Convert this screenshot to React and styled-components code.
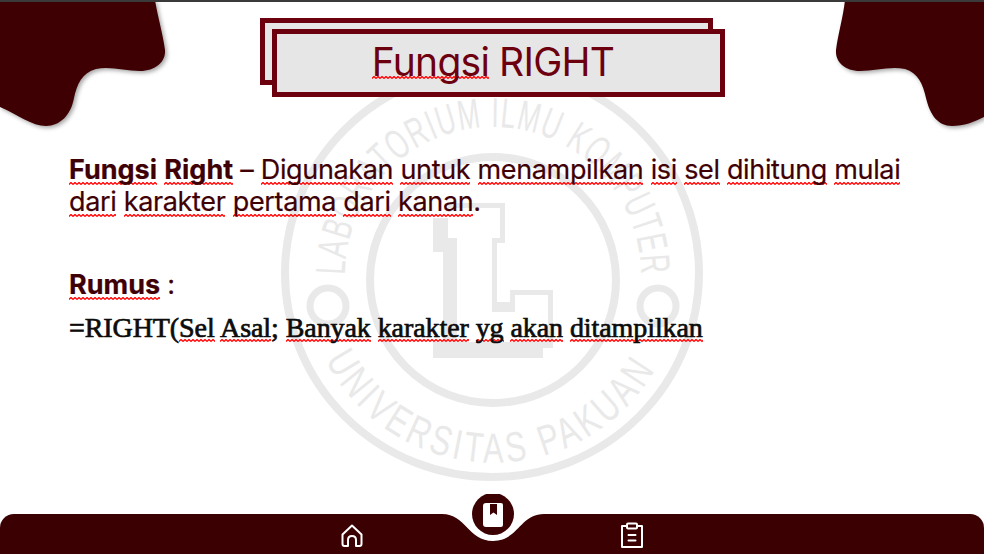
import React from "react";
import styled, { createGlobalStyle } from "styled-components";

const GlobalStyle = createGlobalStyle`
  html, body {
    margin: 0;
    padding: 0;
    background: #ffffff;
  }
`;

const squiggle =
  "data:image/svg+xml,%3Csvg xmlns='http://www.w3.org/2000/svg' width='4' height='3'%3E%3Cpath d='M0 2.5 L2 0.5 L4 2.5' fill='none' stroke='%23f00' stroke-width='1.3'/%3E%3C/svg%3E";

const Page = styled.div`
  position: relative;
  width: 984px;
  height: 554px;
  box-sizing: border-box;
  border-top: 2px solid #3a3a3a;
  background: #ffffff;
  overflow: hidden;
  display: flex;
  flex-direction: column;
  font-family: "Inter", "Liberation Sans", sans-serif;
`;

const Watermark = styled.svg`
  position: absolute;
  left: 0;
  top: -2px;
  width: 984px;
  height: 554px;
`;

const Blob = styled.svg`
  position: absolute;
  left: 0;
  top: -2px;
  width: 984px;
  height: 140px;
  filter: drop-shadow(2px 2px 2px rgba(0, 0, 0, 0.35));
`;

const Header = styled.header`
  position: relative;
  padding: 27px 0 0 272px;
`;

const TitleStack = styled.div`
  position: relative;
  width: 453px;
`;

const BackFrame = styled.div`
  position: absolute;
  left: -12px;
  top: -11px;
  width: 453px;
  height: 67px;
  box-sizing: border-box;
  border: 5px solid #6d000e;
  background: #e6e6e6;
`;

const TitleBox = styled.h1`
  position: relative;
  margin: 0;
  height: 68px;
  box-sizing: border-box;
  border: 5px solid #6d000e;
  background: #e6e6e6;
  display: flex;
  align-items: center;
  justify-content: center;
  gap: 10px;
  padding: 0 11px 3px 0;
  font-size: 39px;
  font-weight: 400;
  letter-spacing: -0.75px;
  color: #6d000e;
`;

const Word = styled.span`
  background: url("${squiggle}") repeat-x 0 calc(100% - ${(props) => props.$lift || 1}px);
`;

const Bold = styled.b`
  font-weight: 700;
  letter-spacing: 0;
`;

const Content = styled.main`
  position: relative;
  padding: 57px 0 0 69px;
`;

const Paragraph = styled.p`
  margin: 0;
  width: 850px;
  font-size: 27px;
  line-height: 32px;
  letter-spacing: -0.35px;
  -webkit-text-stroke: 0.2px #3f0005;
  color: #3f0005;
`;

const RumusLine = styled(Paragraph)`
  margin-top: 51px;
`;

const Formula = styled.p`
  margin: 11px 0 0;
  font-family: "Liberation Serif", serif;
  font-size: 28px;
  line-height: 32px;
  letter-spacing: -0.08px;
  -webkit-text-stroke: 0.7px #0c0c0c;
  color: #0c0c0c;
`;

const Footer = styled.footer`
  position: absolute;
  left: 0;
  right: 0;
  bottom: 0;
  height: 40px;
  background: #3b0002;
  border-radius: 14px 14px 0 0;
  display: flex;
  justify-content: center;
  align-items: flex-end;
`;

const NavSlot = styled.div`
  width: 140px;
  height: 38px;
  display: flex;
  justify-content: center;
  align-items: center;
`;

const Notch = styled.svg`
  position: absolute;
  left: 442px;
  top: -20px;
  width: 102px;
  height: 48px;
`;

const NavIcon = styled.svg`
  display: block;
  width: 24px;
  height: 26px;
  fill: none;
  stroke: #ffffff;
  stroke-width: 2;
  stroke-linejoin: round;
  stroke-linecap: round;
`;

const Logo = () => (
  <Watermark viewBox="0 0 984 554">
    <defs>
      <path id="arcTop" d="M 345 275 A 148 148 0 0 1 641 275" />
      <path id="arcBottom" d="M 325.5 360 A 188 188 0 0 0 660.5 360" />
    </defs>
    <g fill="none" stroke="#e9e9e9">
      <ellipse cx="492" cy="273" rx="207" ry="204" strokeWidth="8" />
      <ellipse cx="493" cy="280" rx="123" ry="123" strokeWidth="8" />
      <circle cx="328" cy="306" r="18" strokeWidth="7" />
      <circle cx="658" cy="306" r="18" strokeWidth="7" />
    </g>
    <path
      fill="#e9e9e9"
      fillRule="evenodd"
      d="M448 203 H505 V243 H497 V302 H510 V290 H553 V348 H543 V358 H433 V342 H443 V252 H433 V218 H448 Z M448 208 V238 H457 V342 H548 V295 H515 V312 H492 V238 H500 V208 Z"
    />
    <g fill="#e9e9e9" fontFamily="Liberation Sans, sans-serif" fontSize="42">
      <text letterSpacing="2">
        <textPath href="#arcTop" textLength="465" lengthAdjust="spacingAndGlyphs">
          LABORATORIUM ILMU KOMPUTER
        </textPath>
      </text>
      <text letterSpacing="5">
        <textPath href="#arcBottom" textLength="405" lengthAdjust="spacingAndGlyphs">
          UNIVERSITAS PAKUAN
        </textPath>
      </text>
    </g>
  </Watermark>
);

export default function App() {
  return (
    <>
      <GlobalStyle />
      <Page>
        <Logo />
        <Blob viewBox="0 0 984 140">
          <path
            fill="#3f0003"
            d="M0 0 H155 C158 18 163 34 165 50 C166 62 155 71 140 71 C125 71 110 66 96 69 C82 73 77 84 74 98 C71 115 60 126 46 126 C32 126 18 115 0 107 Z"
          />
          <path
            fill="#3f0003"
            d="M984 0 H845 C843 18 838 34 836 50 C835 62 845 71 860 71 C875 71 890 66 905 69 C918 73 923 84 926 98 C930 115 938 126 952 126 C964 126 974 122 984 117 Z"
          />
        </Blob>
        <Header>
          <TitleStack>
            <BackFrame />
            <TitleBox>
              <Word $lift={6}>Fungsi</Word> RIGHT
            </TitleBox>
          </TitleStack>
        </Header>
        <Content>
          <Paragraph>
            <Word><Bold>Fungsi</Bold></Word> <Word><Bold>Right</Bold></Word> – <Word>Digunakan</Word> <Word>untuk</Word>{" "}
            <Word>menampilkan</Word> <Word>isi</Word> <Word>sel</Word> <Word>dihitung</Word> <Word>mulai</Word>{" "}
            <Word>dari</Word> <Word>karakter</Word> <Word>pertama</Word> <Word>dari</Word> <Word>kanan</Word>.
          </Paragraph>
          <RumusLine>
            <Word><Bold>Rumus</Bold></Word> :
          </RumusLine>
          <Formula>
            =RIGHT(<Word>Sel</Word> <Word>Asal</Word>; <Word>Banyak</Word> <Word>karakter</Word> <Word>yg</Word>{" "}
            <Word>akan</Word> <Word>ditampilkan</Word>
          </Formula>
        </Content>
        <Footer>
          <Notch viewBox="442 494 102 48">
            <path fill="#ffffff" d="M442 494 H544 V514 C520 514 518 541 493 541 C468 541 466 514 442 514 Z" />
            <circle cx="493" cy="514" r="21" fill="#3b0002" />
            <path
              fill="#ffffff"
              fillRule="evenodd"
              d="M486 503 H501 Q503 503 503 505 V525 Q503 527 501 527 H486 Q483 527 483 524 V506 Q483 503 486 503 Z M490 504 V515 L493.5 512.5 L497 515 V504 Z"
            />
          </Notch>
          <NavSlot>
            <NavIcon viewBox="0 0 24 26">
              <path d="M2.5 12.5 L12 3.5 L21.5 12.5 V22 Q21.5 24 19.5 24 H16 V18 Q16 14 12 14 Q8 14 8 18 V24 H4.5 Q2.5 24 2.5 22 Z" />
            </NavIcon>
          </NavSlot>
          <NavSlot />
          <NavSlot>
            <NavIcon viewBox="0 0 24 26">
              <path d="M7 4 H2 V25 H22 V4 H17" />
              <rect x="7" y="1.5" width="10" height="5" rx="1" />
              <path d="M8.5 13 H15.5 M8.5 18.5 H15.5" />
            </NavIcon>
          </NavSlot>
        </Footer>
      </Page>
    </>
  );
}
